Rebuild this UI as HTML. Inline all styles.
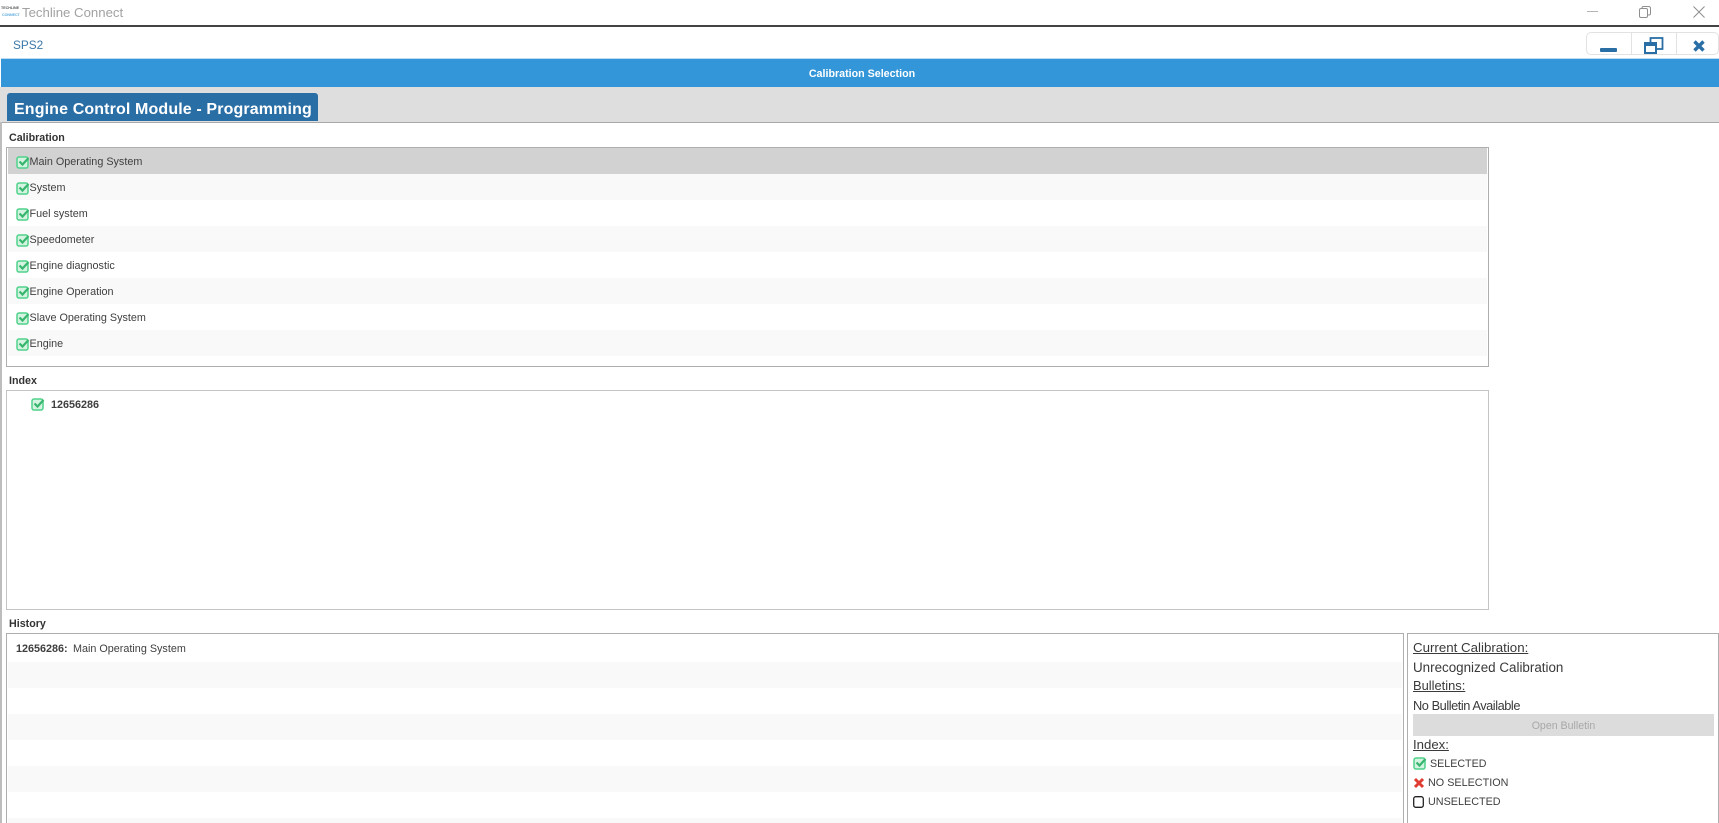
<!DOCTYPE html>
<html>
<head>
<meta charset="utf-8">
<style>
html,body{margin:0;padding:0;background:#fff;width:1719px;height:823px;overflow:hidden;}
#w{position:absolute;left:0;top:0;width:1719px;height:823px;overflow:hidden;font-family:"Liberation Sans",Arial,sans-serif;color:#3a3a3a;background:#fff;}
.a{position:absolute;white-space:nowrap;}
.box{position:absolute;box-sizing:border-box;border:1px solid #aeaeae;background:#fff;}
.row{position:absolute;height:26px;}
.alt{background:#f9f9f9;}
.lbl{position:absolute;font-size:10.7px;font-weight:bold;line-height:14px;color:#333;white-space:nowrap;}
.t{position:absolute;font-size:10.8px;line-height:14px;color:#3f3f3f;white-space:nowrap;}
.u{position:absolute;font-size:13.2px;line-height:16px;color:#3a3a3a;white-space:nowrap;}
svg{position:absolute;overflow:visible;}
</style>
</head>
<body>
<div id="w">
<!-- Title bar -->
<div class="a" style="left:1px;top:6px;font-size:3.6px;line-height:4px;font-weight:bold;color:#555">TECHLINE</div>
<div class="a" style="left:2px;top:13px;font-size:3.6px;line-height:4px;font-weight:bold;color:#5aa9dc">CONNECT</div>
<div class="a" style="left:22px;top:4px;font-size:13.2px;line-height:17px;color:#a2a2a2">Techline Connect</div>
<svg style="left:1587px;top:11px" width="11" height="1"><rect width="11" height="1" fill="#b5b5b5"/></svg>
<svg style="left:1639px;top:6px" width="12" height="12" fill="none" stroke="#8f8f8f" stroke-width="1"><rect x=".5" y="2.5" width="8" height="9" rx="1.5"/><path d="M3 2.500V1.800Q3 .5 4.500 .5H9.500Q11.500 .5 11.500 2.500V7.500Q11.500 9 10 9H8.500"/></svg>
<svg style="left:1693px;top:6px" width="12" height="12" fill="none" stroke="#8f8f8f" stroke-width="1"><path d="M.5 .5L11.500 11.500M11.500 .5L.5 11.500"/></svg>
<div class="a" style="left:0;top:25px;width:1719px;height:2px;background:#444"></div>

<!-- SPS2 row -->
<div class="a" style="left:13px;top:37px;font-size:11.8px;line-height:16px;color:#3b78a8">SPS2</div>
<div class="a" style="left:1586px;top:32px;width:133px;height:23px;box-sizing:border-box;border:1px solid #e2e2e2;border-radius:5px;background:#fff"></div>
<div class="a" style="left:1631px;top:32px;width:1px;height:23px;background:#e2e2e2"></div>
<div class="a" style="left:1676px;top:32px;width:1px;height:23px;background:#e2e2e2"></div>
<div class="a" style="left:1600px;top:48px;width:17px;height:4px;background:#2a6ea6;border-radius:1px"></div>
<svg style="left:1644px;top:37px" width="20" height="17" fill="none" stroke="#2a6ea6"><rect x="6.500" y="1" width="12" height="11" stroke-width="1.800"/><rect x="1" y="6" width="11" height="10" fill="#fff" stroke-width="2"/><rect x="1" y="6" width="11" height="3" fill="#2a6ea6" stroke="none"/></svg>
<svg style="left:1693px;top:40px" width="12" height="12" fill="none" stroke="#2a6ea6" stroke-width="3.400"><path d="M1.500 1.500L10.500 10.500M10.500 1.500L1.500 10.500"/></svg>

<!-- Blue bar -->
<div class="a" style="left:1px;top:58px;width:1718px;height:1px;background:#bcdcf2"></div>
<div class="a" style="left:1px;top:59px;width:1718px;height:28px;background:#3296d9"></div>
<div class="a" style="left:3px;top:60px;width:1718px;height:28px;line-height:28px;text-align:center;font-size:10.7px;font-weight:bold;color:#fff">Calibration Selection</div>

<!-- Tab band -->
<div class="a" style="left:0;top:87px;width:1719px;height:35px;background:#dedede"></div>
<div class="a" style="left:7px;top:93px;width:311px;height:28px;background:#2a6ea6;border-radius:3px 3px 0 0"></div>
<div class="a" style="left:14px;top:100.500px;font-size:16px;line-height:18px;font-weight:bold;color:#fff;letter-spacing:.13px">Engine Control Module - Programming</div>
<div class="a" style="left:0;top:122px;width:1719px;height:1px;background:#a9a9a9"></div>
<div class="a" style="left:0;top:122px;width:2px;height:701px;background:#bdbdbd"></div>

<!-- Calibration -->
<div class="lbl" style="left:9px;top:131px">Calibration</div>
<div class="box" style="left:6px;top:147px;width:1483px;height:220px"></div>
<div class="row" style="left:8px;top:148px;width:1479px;background:#d2d2d2"></div>
<div class="row alt" style="left:8px;top:174px;width:1479px"></div>
<div class="row alt" style="left:8px;top:226px;width:1479px"></div>
<div class="row alt" style="left:8px;top:278px;width:1479px"></div>
<div class="row alt" style="left:8px;top:330px;width:1479px"></div>

<svg width="0" height="0" style="position:absolute"><defs><g id="chk"><rect x="1" y="2" width="11" height="11" rx="2" fill="#d4f3e0" stroke="#4fd28a" stroke-width="1.500"/><path d="M3.500 6.500L6.500 9.500L12.500 3" fill="none" stroke="#38b56e" stroke-width="2.200"/></g></defs></svg>

<svg style="left:16px;top:154.500px" width="14" height="14"><use href="#chk"/></svg>
<svg style="left:16px;top:180.500px" width="14" height="14"><use href="#chk"/></svg>
<svg style="left:16px;top:206.500px" width="14" height="14"><use href="#chk"/></svg>
<svg style="left:16px;top:232.500px" width="14" height="14"><use href="#chk"/></svg>
<svg style="left:16px;top:258.500px" width="14" height="14"><use href="#chk"/></svg>
<svg style="left:16px;top:284.500px" width="14" height="14"><use href="#chk"/></svg>
<svg style="left:16px;top:310.500px" width="14" height="14"><use href="#chk"/></svg>
<svg style="left:16px;top:336.500px" width="14" height="14"><use href="#chk"/></svg>
<div class="t" style="left:29.500px;top:155px">Main Operating System</div>
<div class="t" style="left:29.500px;top:181px">System</div>
<div class="t" style="left:29.500px;top:207px">Fuel system</div>
<div class="t" style="left:29.500px;top:233px">Speedometer</div>
<div class="t" style="left:29.500px;top:259px">Engine diagnostic</div>
<div class="t" style="left:29.500px;top:285px">Engine Operation</div>
<div class="t" style="left:29.500px;top:311px">Slave Operating System</div>
<div class="t" style="left:29.500px;top:337px">Engine</div>

<!-- Index -->
<div class="lbl" style="left:9px;top:374px">Index</div>
<div class="box" style="left:6px;top:390px;width:1483px;height:220px;border-color:#c4c4c4"></div>
<svg style="left:30.500px;top:396.500px" width="14" height="14"><use href="#chk"/></svg>
<div class="t" style="left:51px;top:398px;font-weight:bold">12656286</div>

<!-- History -->
<div class="lbl" style="left:9px;top:617px">History</div>
<div class="box" style="left:6px;top:633px;width:1398px;height:200px"></div>
<div class="row alt" style="left:8px;top:662px;width:1394px"></div>
<div class="row alt" style="left:8px;top:714px;width:1394px"></div>
<div class="row alt" style="left:8px;top:766px;width:1394px"></div>
<div class="row alt" style="left:8px;top:818px;width:1394px"></div>
<div class="t" style="left:16px;top:642px;font-weight:bold">12656286:</div>
<div class="t" style="left:73px;top:642px">Main Operating System</div>

<!-- Right panel -->
<div class="box" style="left:1407px;top:633px;width:312px;height:200px"></div>
<div class="u" style="left:1413px;top:640px;text-decoration:underline;font-size:13.300px">Current Calibration:</div>
<div class="u" style="left:1413px;top:659.500px;font-size:13.400px">Unrecognized Calibration</div>
<div class="u" style="left:1413px;top:678px;text-decoration:underline;font-size:12.900px">Bulletins:</div>
<div class="u" style="left:1413px;top:697.500px;font-size:12.800px;letter-spacing:-.45px">No Bulletin Available</div>
<div class="a" style="left:1413px;top:714px;width:301px;height:22px;background:#dcdcdc"></div>
<div class="a" style="left:1413px;top:714.500px;width:301px;height:22px;line-height:22px;text-align:center;font-size:10.600px;color:#a8a8a8">Open Bulletin</div>
<div class="u" style="left:1413px;top:737px;text-decoration:underline">Index:</div>
<svg style="left:1413px;top:756px" width="14" height="14"><use href="#chk"/></svg>
<div class="t" style="left:1430px;top:756.500px;font-size:10.700px">SELECTED</div>
<svg style="left:1414px;top:778px" width="10" height="10" fill="none" stroke="#e03c31" stroke-width="3"><path d="M1 1L9 9M9 1L1 9"/></svg>
<div class="t" style="left:1428px;top:775.500px;font-size:10.800px">NO SELECTION</div>
<svg style="left:1413px;top:796px" width="11" height="12" fill="none" stroke="#222" stroke-width="1.300"><rect x=".7" y=".7" width="9.600" height="10.600" rx="2"/></svg>
<div class="t" style="left:1428px;top:794.500px;font-size:10.800px">UNSELECTED</div>
</div>
</body>
</html>
